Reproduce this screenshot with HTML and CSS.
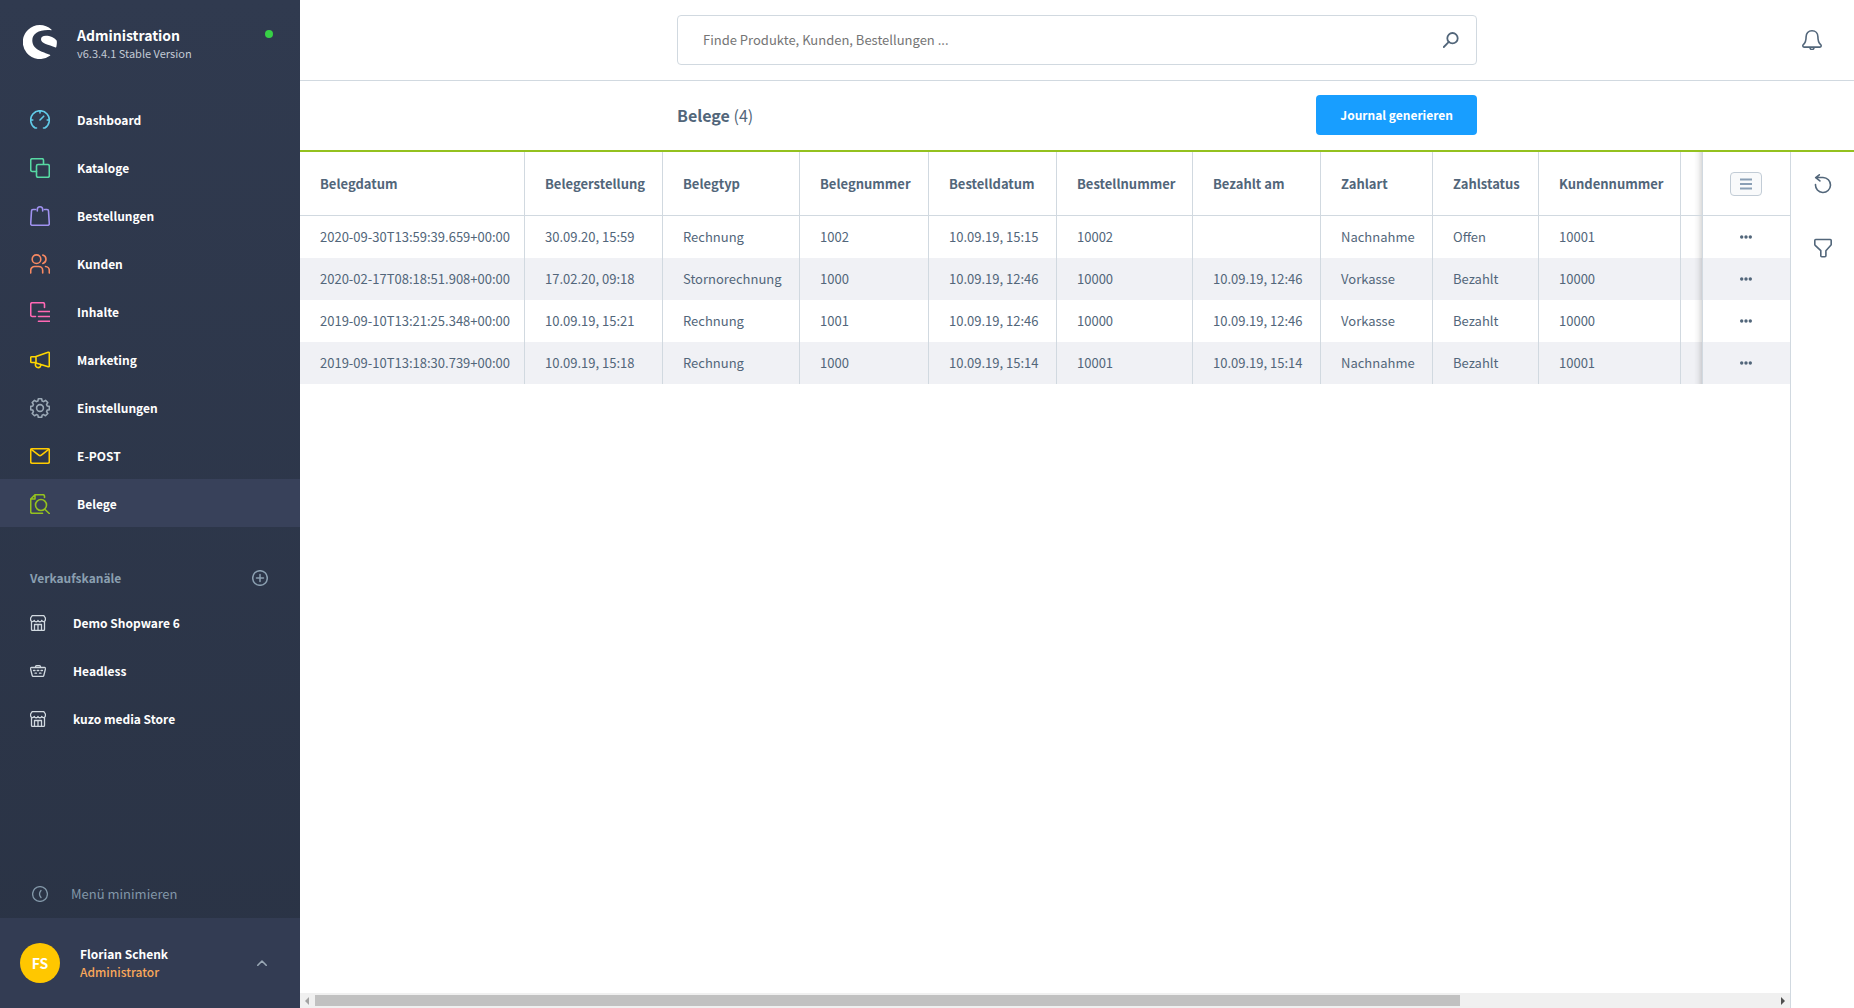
FILE: index.html
```html
<!DOCTYPE html>
<html lang="de">
<head>
<meta charset="utf-8">
<meta name="viewport" content="width=device-width, initial-scale=1">
<title>Belege | Administration</title>
<link rel="stylesheet" href="styles.css">
</head>
<body>
<svg class="sprite" aria-hidden="true">
  <symbol id="store" viewBox="0 0 16 16"><path d="M2.200.6h11.600L15.400 3v1.800a1.900 1.900 0 0 1-3.700.5 1.900 1.900 0 0 1-3.700 0 1.900 1.900 0 0 1-3.700 0A1.900 1.900 0 0 1 .6 4.800V3zM1.500 7v7.400a1 1 0 0 0 1 1h11a1 1 0 0 0 1-1V7M4.500 15V9.500h7V15M8 9.500V15"/></symbol>
  <symbol id="dots" viewBox="0 0 12 4"><circle cx="1.700" cy="2" r="1.700"/><circle cx="6" cy="2" r="1.700"/><circle cx="10.300" cy="2" r="1.700"/></symbol>
</svg>
<div class="app">
  <aside class="menu">
    <header class="brand">
      <svg class="brand-logo" viewBox="0 0 34 34" aria-hidden="true"><path d="M28.400 4.600A17 17 0 1 0 26.900 30.700c.6-.4.500-.8 0-1C20 27 9.300 24.500 9.300 15.500 9.300 8 17 4.200 28.200 5.200c.4 0 .5-.3.200-.6z"/><path d="M33.600 15.600C31.500 12.500 27 10.800 22.900 10.800c-3.300 0-4.900 1.500-4.900 3.400 0 4.300 7.500 5.300 14.600 8.300.4.1.6 0 .7-.4.500-2 .7-4.200.5-5.900 0-.2-.1-.4-.2-.6z"/></svg>
      <div class="brand-text">
        <span class="brand-name">Administration</span>
        <span class="brand-version">v6.3.4.1 Stable Version</span>
      </div>
      <span class="brand-status"></span>
    </header>

    <nav class="nav" aria-label="Hauptmenü">
      <a class="nav-item dashboard" href="#"><svg class="icon" viewBox="0 0 20 20"><path d="M6.500 18H5.200A9.300 9.300 0 1 1 14.800 18h-1.300M10 .8V3M.8 10h2M17.200 10h2M10 10l3.700-3.800"/></svg>Dashboard</a>
      <a class="nav-item catalogue" href="#"><svg class="icon" viewBox="0 0 20 20"><rect x="6.500" y="6.500" width="12.800" height="12.800" rx="1.500"/><path d="M6.500 13.500H2.200A1.500 1.500 0 0 1 .7 12V2.200A1.500 1.500 0 0 1 2.200.7H12a1.500 1.500 0 0 1 1.500 1.500v4"/></svg>Kataloge</a>
      <a class="nav-item orders" href="#"><svg class="icon" viewBox="0 0 20 20"><path d="M5.500 3.500H3A1.500 1.500 0 0 0 1.500 5L.7 17.600a1.600 1.600 0 0 0 1.600 1.700h15.400a1.600 1.600 0 0 0 1.600-1.700L18.500 5A1.500 1.500 0 0 0 17 3.500h-2.500M7.300 5V3.500a2.700 2.700 0 0 1 5.400 0V5"/></svg>Bestellungen</a>
      <a class="nav-item customers" href="#"><svg class="icon" viewBox="0 0 20 20"><circle cx="6.500" cy="5.200" r="4.300"/><path d="M.7 19v-2.500a4 4 0 0 1 4-4h4a4 4 0 0 1 4 4V19M12.800 1.100a4.300 4.300 0 0 1 0 8.300M15.500 12.500a4 4 0 0 1 3.800 4V19"/></svg>Kunden</a>
      <a class="nav-item content" href="#"><svg class="icon" viewBox="0 0 20 20"><path d="M5.500 14.500H2.200A1.500 1.500 0 0 1 .7 13V2.200A1.500 1.500 0 0 1 2.200.7H13a1.500 1.500 0 0 1 1.500 1.500v3.300M8.500 9.500H20M8.500 14.500H20M8.500 19.300H20"/></svg>Inhalte</a>
      <a class="nav-item marketing" href="#"><svg class="icon" viewBox="0 0 20 20"><path d="M6 6.500 18.200 2.300q1.100-.3 1.100.8v12.800q0 1.100-1.100.8L6 13zM6 6.800H1.700a1 1 0 0 0-1 1V11.500a1 1 0 0 0 1 1H6M5.500 13v1.400a2.600 2.600 0 0 0 5.200 1v-1"/></svg>Marketing</a>
      <a class="nav-item settings" href="#"><svg class="icon" viewBox="0 0 20 20"><circle cx="10" cy="10" r="3.400"/><path d="M8.300.8h3.400l.4 2.200 1.500.6 1.900-1.300 2.300 2.300-1.200 1.900.6 1.500 2.100.4v3.300l-2.100.4-.6 1.500 1.200 1.900-2.300 2.300-1.900-1.200-1.500.6-.4 2.100H8.300l-.4-2.100-1.500-.6-1.900 1.200-2.300-2.300 1.200-1.900-.6-1.500-2.100-.4V8.400L2.800 8l.6-1.500-1.200-1.900 2.300-2.300 1.900 1.300L7.900 3z"/></svg>Einstellungen</a>
      <a class="nav-item epost" href="#"><svg class="icon" viewBox="0 0 20 20"><rect x=".7" y="2.700" width="18.600" height="14.600" rx="1.500"/><path d="m1.300 3.300 7.400 5.800q1.300 1 2.600 0l7.400-5.800"/></svg>E-POST</a>
      <a class="nav-item receipts active" href="#" aria-current="page"><svg class="icon" viewBox="0 0 20 20"><path d="M12.500 19.300H2.200a1.500 1.500 0 0 1-1.500-1.500V5L5 .7h8A1.500 1.500 0 0 1 14.500 2v1.500M5 .9v4.100H.9M15 15.500l4.300 4"/><circle cx="11" cy="11" r="5.500"/></svg>Belege</a>
    </nav>

    <section class="channels">
      <div class="channels-head">
        <h2 class="channels-title">Verkaufskanäle</h2>
        <button class="plain channels-add" type="button" aria-label="Verkaufskanal hinzufügen"><svg class="icon-small" viewBox="0 0 16 16"><circle cx="8" cy="8" r="7.300"/><path d="M8 4.500v7M4.500 8h7"/></svg></button>
      </div>
      <a class="channel" href="#"><svg class="icon-small"><use href="#store"/></svg>Demo Shopware 6</a>
      <a class="channel" href="#"><svg class="icon-small" viewBox="0 0 16 16"><path d="M1.500 4.500h13a1 1 0 0 1 1 1.200l-1.700 6.800a1 1 0 0 1-1 .8H3.200a1 1 0 0 1-1-.8L.5 5.700a1 1 0 0 1 1-1.200zM5.500 4.500V3.700A1 1 0 0 1 6.500 2.700h3a1 1 0 0 1 1 1v.8"/><path d="M3.500 7.500h1.500M7.200 7.500h1.600M11 7.500h1.500M5 10.200h1.500M9.500 10.200H11"/></svg>Headless</a>
      <a class="channel" href="#"><svg class="icon-small"><use href="#store"/></svg>kuzo media Store</a>
    </section>

    <button class="plain collapse" type="button"><svg class="icon-small" viewBox="0 0 16 16"><circle cx="8" cy="8" r="7.400"/><path d="M9 4.500Q6 8 9 11.500"/></svg>Menü minimieren</button>

    <button class="plain user" type="button">
      <span class="avatar">FS</span>
      <span class="user-text"><span class="user-name">Florian Schenk</span><span class="user-role">Administrator</span></span>
      <svg class="user-arrow" viewBox="0 0 10 6"><path d="m.8 5.300L5 1l4.200 4.300"/></svg>
    </button>
  </aside>

  <main class="page">
    <header class="topbar">
      <form class="search" role="search">
        <input class="search-input" type="search" aria-label="Suche" placeholder="Finde Produkte, Kunden, Bestellungen ...">
        <button class="plain search-button" type="submit" aria-label="Suchen"><svg class="icon-small" viewBox="0 0 16 16"><circle cx="9.500" cy="6.200" r="5.200"/><path d="M5.800 9.900.8 15"/></svg></button>
      </form>
      <button class="plain bell" type="button" aria-label="Benachrichtigungen"><svg class="icon" viewBox="0 0 20 20"><path d="M10 .8c3.700 0 5.900 2.600 5.900 6 0 4.200.5 5.700 2.500 7.500 1.300 1.300.9 2.800-.6 2.800H2.200c-1.500 0-1.900-1.500-.6-2.800 2-1.800 2.500-3.300 2.500-7.500 0-3.400 2.200-6 5.900-6zM8 17.500a2 2 0 0 0 4 0"/></svg></button>
    </header>

    <div class="smartbar">
      <div class="smartbar-inner">
        <h1 class="title">Belege <span class="count">(4)</span></h1>
        <button class="primary" type="button">Journal generieren</button>
      </div>
    </div>

    <div class="workspace">
      <div class="grid">
        <div class="grid-scroll">
          <table class="data">
            <colgroup><col class="w-date"><col class="w-created"><col class="w-type"><col class="w-number"><col class="w-medium"><col class="w-order"><col class="w-medium"><col class="w-payment"><col class="w-status"><col class="w-customer"><col class="w-rest"><col class="w-actions"></colgroup>
            <thead>
              <tr><th>Belegdatum</th><th>Belegerstellung</th><th>Belegtyp</th><th>Belegnummer</th><th>Bestelldatum</th><th>Bestellnummer</th><th>Bezahlt am</th><th>Zahlart</th><th>Zahlstatus</th><th>Kundennummer</th><th></th><th class="actions"><button class="columns-button" type="button" aria-label="Spalten"><svg viewBox="0 0 12 12"><path d="M0 1.500h12M0 6h12M0 10.500h12"/></svg></button></th></tr>
            </thead>
            <tbody>
              <tr><td>2020-09-30T13:59:39.659+00:00</td><td>30.09.20, 15:59</td><td>Rechnung</td><td>1002</td><td>10.09.19, 15:15</td><td>10002</td><td></td><td>Nachnahme</td><td>Offen</td><td>10001</td><td></td><td class="actions"><button class="plain more" type="button" aria-label="Aktionen"><svg><use href="#dots"/></svg></button></td></tr>
              <tr><td>2020-02-17T08:18:51.908+00:00</td><td>17.02.20, 09:18</td><td>Stornorechnung</td><td>1000</td><td>10.09.19, 12:46</td><td>10000</td><td>10.09.19, 12:46</td><td>Vorkasse</td><td>Bezahlt</td><td>10000</td><td></td><td class="actions"><button class="plain more" type="button" aria-label="Aktionen"><svg><use href="#dots"/></svg></button></td></tr>
              <tr><td>2019-09-10T13:21:25.348+00:00</td><td>10.09.19, 15:21</td><td>Rechnung</td><td>1001</td><td>10.09.19, 12:46</td><td>10000</td><td>10.09.19, 12:46</td><td>Vorkasse</td><td>Bezahlt</td><td>10000</td><td></td><td class="actions"><button class="plain more" type="button" aria-label="Aktionen"><svg><use href="#dots"/></svg></button></td></tr>
              <tr><td>2019-09-10T13:18:30.739+00:00</td><td>10.09.19, 15:18</td><td>Rechnung</td><td>1000</td><td>10.09.19, 15:14</td><td>10001</td><td>10.09.19, 15:14</td><td>Nachnahme</td><td>Bezahlt</td><td>10001</td><td></td><td class="actions"><button class="plain more" type="button" aria-label="Aktionen"><svg><use href="#dots"/></svg></button></td></tr>
            </tbody>
          </table>
        </div>
        <div class="scrollbar" aria-hidden="true">
          <svg class="scroll-arrow off" viewBox="0 0 15 15"><path d="M9 4v8L5 8z"/></svg>
          <div class="scroll-track"><div class="scroll-thumb"></div></div>
          <svg class="scroll-arrow" viewBox="0 0 15 15"><path d="M6 4v8l4-4z"/></svg>
        </div>
      </div>
      <aside class="tools" aria-label="Werkzeuge">
        <button class="plain tool" type="button" aria-label="Aktualisieren"><svg class="icon" viewBox="0 0 20 20"><path d="M2.500 10.500a7.500 7.500 0 1 0 7.500-7H3M6.300.8 2.700 3.700l4.200 3.200"/></svg></button>
        <button class="plain tool" type="button" aria-label="Filter"><svg class="icon" viewBox="0 0 20 20"><path d="M2.700 1.500h14.600q.9 0 .9.900v4q0 .5-.4.900l-4.900 5.400v5q0 1-1 1H8.800q-1 0-1-1v-5L2.200 7.300q-.4-.4-.4-.9v-4q0-.9.900-.9z"/></svg></button>
      </aside>
    </div>
  </main>
</div>
</body>
</html>
```
FILE: styles.css
```css
* { box-sizing: border-box; }

body {
  margin: 0;
  font-family: "Noto Sans CJK SC", "Noto Sans", sans-serif;
  font-size: 13px;
  line-height: 18px;
  color: #52667a;
  background: #fff;
}

a { color: inherit; text-decoration: none; }
svg { display: block; flex: none; fill: none; stroke: currentColor; stroke-linecap: round; stroke-linejoin: round; }
.sprite { position: absolute; width: 0; height: 0; }
.icon { width: 20px; height: 20px; stroke-width: 1.6; }
.icon-small { width: 16px; height: 16px; stroke-width: 1.3; }
.plain { border: 0; padding: 0; background: none; color: inherit; font: inherit; text-align: left; cursor: pointer; }

.app { display: flex; height: 100vh; }

/* Main menu */
.menu {
  display: flex;
  flex: none;
  flex-direction: column;
  width: 300px;
  font-size: 12px;
  color: #fff;
  background: linear-gradient(#303a4f, #2a3345);
}
.brand { display: flex; gap: 20px; padding: 25px 27px 0 23px; height: 95px; }
.brand-logo { width: 34px; height: 34px; fill: #fff; stroke: none; }
.brand-text { display: flex; flex: 1; flex-direction: column; }
.brand-name { font-size: 14px; font-weight: 600; line-height: 20px; }
.brand-version { font-size: 11px; line-height: 16px; color: #c3cad5; }
.brand-status { width: 8px; height: 8px; margin-top: 5px; border-radius: 50%; background: #37d046; }

.nav-item { display: flex; align-items: center; gap: 27px; height: 48px; padding: 1px 30px 0; font-weight: 600; }
.nav-item.active { background: #38415a; }
.dashboard svg { color: #61cbe8; }
.catalogue svg { color: #57d9a3; }
.orders svg { color: #a092f0; }
.customers svg { color: #f88962; }
.content svg { color: #ff68b4; }
.marketing svg { color: #ffd700; }
.settings svg { color: #9aa8b5; }
.epost svg { color: #ffcc00; }
.receipts svg { color: #94c11f; }

.channels { padding-top: 33px; }
.channels-head { display: flex; align-items: center; justify-content: space-between; height: 36px; padding: 0 32px 0 30px; color: #8a9fb0; }
.channels-title { margin: 0; font-size: 12px; font-weight: 600; }
.channels-add svg { stroke-width: 1.5; }
.channel { display: flex; align-items: center; gap: 27px; height: 48px; padding: 0 30px; font-weight: 600; }
.channels-head + .channel { margin-top: 3px; }
.channel svg { color: #d1d9e0; }

.collapse { display: flex; align-items: center; gap: 23px; height: 48px; margin-top: auto; padding: 0 32px; font-size: 13px; color: #8297a8; }
.user { display: flex; align-items: center; gap: 20px; height: 90px; padding: 0 33px 0 20px; background: #333c53; }
.avatar { display: grid; place-items: center; width: 40px; height: 40px; border-radius: 50%; font-size: 14px; font-weight: 600; background: #ffc700; }
.user-text { display: flex; flex: 1; flex-direction: column; }
.user-name { font-weight: 600; }
.user-role { font-weight: 500; color: #faa85a; }
.user-arrow { width: 10px; height: 6px; stroke-width: 1.6; color: #9aa8b5; }

/* Page head */
.page { display: flex; flex: 1; flex-direction: column; min-width: 0; }
.topbar { display: grid; grid-template-columns: 1fr minmax(0, 800px) 1fr; align-items: center; height: 81px; border-bottom: 1px solid #d1d9e0; }
.search { display: flex; grid-column: 2; align-items: center; height: 50px; padding: 0 17px 0 25px; border: 1px solid #d1d9e0; border-radius: 4px; }
.search-input { flex: 1; min-width: 0; border: 0; padding: 0; outline: 0; font: inherit; color: #52667a; }
.search-input::placeholder { color: #757575; opacity: 1; }
.search-button svg { stroke-width: 1.8; }
.bell { justify-self: end; margin-right: 32px; }

.smartbar { height: 71px; padding: 14px 0 15px; border-bottom: 2px solid #94c11f; }
.smartbar-inner { display: flex; align-items: center; justify-content: space-between; max-width: 800px; margin: 0 auto; }
.title { margin: 0; font-size: 16px; font-weight: 600; line-height: 24px; }
.count { font-weight: 400; }
.primary { height: 40px; padding: 0 24px; border: 0; border-radius: 4px; font: inherit; font-size: 12px; font-weight: 600; color: #fff; background: #189eff; }

/* Data grid */
.workspace { display: flex; flex: 1; min-height: 0; }
.grid { display: flex; flex: 1; flex-direction: column; min-width: 0; }
.grid-scroll { flex: 1; overflow: auto; scrollbar-width: none; }
.data { width: 1895px; border-spacing: 0; table-layout: fixed; }
.w-date { width: 225px; }
.w-created { width: 138px; }
.w-type { width: 137px; }
.w-number { width: 129px; }
.w-medium { width: 128px; }
.w-order { width: 136px; }
.w-payment { width: 112px; }
.w-status { width: 106px; }
.w-customer { width: 142px; }
.w-actions { width: 88px; }
.data th, .data td { padding: 0 0 0 20px; border-right: 1px solid #d1d9e0; text-align: left; white-space: nowrap; background: #fff; }
.data th { height: 64px; border-bottom: 1px solid #d1d9e0; font-weight: 600; }
.data td { height: 42px; }
.data tr:nth-child(even) td { background: #f0f1f5; }
.data .actions { position: sticky; right: 0; padding: 0 2px 0 0; border-right: 0; border-left: 1px solid #d1d9e0; }
.data .actions::before { content: ""; position: absolute; top: 0; bottom: 0; left: -9px; width: 8px; background: linear-gradient(to right, rgba(0, 0, 0, 0), rgba(0, 0, 0, .04) 50%, rgba(0, 0, 0, .14)); }
.columns-button { display: grid; place-items: center; width: 32px; height: 24px; margin: 0 auto; padding: 0; border: 1px solid #c2ccd6; border-radius: 4px; color: #8a9fb5; background: #f9fafb; }
.columns-button svg { width: 12px; height: 12px; stroke-width: 1.8; stroke-linecap: butt; }
.more { display: block; margin: 0 auto; }
.more svg { width: 12px; height: 4px; fill: #52667a; stroke: none; }

.scrollbar { display: flex; height: 15px; background: #f0f0f0; }
.scroll-arrow { width: 15px; height: 15px; fill: #505050; stroke: none; }
.scroll-arrow.off { fill: #a3a3a3; }
.scroll-track { flex: 1; padding: 2px 0; }
.scroll-thumb { width: 78.4%; height: 11px; background: #c1c1c1; }

.tools { flex: none; width: 64px; border-left: 1px solid #d1d9e0; }
.tool { display: grid; place-items: center; width: 100%; height: 64px; }
```
